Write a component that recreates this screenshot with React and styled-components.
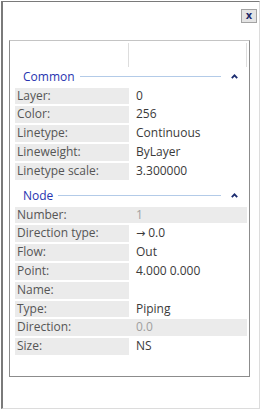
import React from 'react';
import styled, { createGlobalStyle } from 'styled-components';

const GlobalStyle = createGlobalStyle`
  html, body {
    margin: 0;
    padding: 0;
    background: #ffffff;
  }
  body {
    font-family: 'Open Sans', 'Noto Sans', sans-serif;
  }
`;

const Frame = styled.div`
  box-sizing: border-box;
  margin: 1px 0 0 1px;
  width: 259px;
  height: 408px;
  border-top: 1px solid #7a7a7a;
  border-left: 2px solid #7a7a7a;
  border-right: 1px solid #dcdcdc;
  border-bottom: 1px solid #dcdcdc;
  background: #ffffff;
  display: flex;
  flex-direction: column;
`;

const Toolbar = styled.div`
  display: flex;
  justify-content: flex-end;
  padding: 7px 2px 0 0;
  height: 14px;
`;

const CloseButton = styled.button`
  box-sizing: border-box;
  width: 16px;
  height: 14px;
  padding: 0 0 1px;
  border: 1px solid #a3a3a3;
  background: #e4e4e4;
  font-family: 'DejaVu Sans', sans-serif;
  font-size: 10px;
  font-weight: bold;
  line-height: 10px;
  color: #1c2a6a;
  display: flex;
  align-items: center;
  justify-content: center;
`;

const Panel = styled.div`
  box-sizing: border-box;
  margin: 17px 0 0 6px;
  width: 241px;
  height: 337px;
  border: 1px solid #8c8c8c;
  border-top-color: #c4c4c4;
  padding: 0 2px 0 0;
`;

const Strip = styled.div`
  display: flex;
  height: 26px;
  padding-top: 2px;
  box-sizing: border-box;
`;

const StripCell = styled.div`
  width: ${p => p.w}px;
  border-right: 1px solid #dddddd;
`;

const Section = styled.div`
  margin-top: ${p => (p.first ? 0 : 6.3)}px;
`;

const SectionHeader = styled.div`
  display: flex;
  align-items: center;
  height: 19px;
  margin-bottom: 1.7px;
  padding-left: 13px;
  padding-right: 9px;
`;

const SectionTitle = styled.span`
  font-size: 12px;
  line-height: 19px;
  color: #2734b0;
  margin-right: 5px;
`;

const Rule = styled.div`
  flex: 1;
  height: 1px;
  background: #b3cbe8;
  margin-right: 10px;
`;

const Rows = styled.div`
  display: flex;
  flex-direction: column;
  gap: 2px;
  padding-left: 5px;
`;

const Row = styled.div`
  display: flex;
  height: 16.8px;
  background: ${p => (p.disabled ? '#ebebeb' : 'transparent')};
`;

const Label = styled.div`
  box-sizing: border-box;
  width: 114px;
  background: #ebebeb;
  padding-left: 2px;
  font-size: 12px;
  line-height: 16.8px;
  color: #555555;
  white-space: nowrap;
`;

const Value = styled.div`
  box-sizing: border-box;
  width: 118px;
  padding-left: 7px;
  font-size: 12px;
  line-height: 16.8px;
  color: ${p => (p.disabled ? '#a0a0a0' : '#3a3a3a')};
  white-space: nowrap;
`;

const Arrow = styled.span`
  font-family: 'DejaVu Sans', sans-serif;
  font-size: 11px;
  margin-right: 3px;
`;

const Caret = () => (
  <svg width="7" height="5" viewBox="0 0 7 5">
    <path d="M0.8 4.2 L3.5 1.4 L6.2 4.2" fill="none" stroke="#1b2c70" strokeWidth="1.8" />
  </svg>
);

const sections = [
  {
    title: 'Common',
    rows: [
      ['Layer:', '0'],
      ['Color:', '256'],
      ['Linetype:', 'Continuous'],
      ['Lineweight:', 'ByLayer'],
      ['Linetype scale:', '3.300000'],
    ],
  },
  {
    title: 'Node',
    rows: [
      ['Number:', '1', true],
      ['Direction type:', <><Arrow>→</Arrow>0.0</>],
      ['Flow:', 'Out'],
      ['Point:', '4.000 0.000'],
      ['Name:', ''],
      ['Type:', 'Piping'],
      ['Direction:', '0.0', true],
      ['Size:', 'NS'],
    ],
  },
];

export default function App() {
  return (
    <>
      <GlobalStyle />
      <Frame>
        <Toolbar>
          <CloseButton>x</CloseButton>
        </Toolbar>
        <Panel>
          <Strip>
            <StripCell w={118} />
            <StripCell w={118} />
          </Strip>
          {sections.map((s, i) => (
            <Section key={s.title} first={i === 0}>
              <SectionHeader>
                <SectionTitle>{s.title}</SectionTitle>
                <Rule />
                <Caret />
              </SectionHeader>
              <Rows>
                {s.rows.map(([label, value, disabled]) => (
                  <Row key={label} disabled={disabled}>
                    <Label>{label}</Label>
                    <Value disabled={disabled}>{value}</Value>
                  </Row>
                ))}
              </Rows>
            </Section>
          ))}
        </Panel>
      </Frame>
    </>
  );
}
